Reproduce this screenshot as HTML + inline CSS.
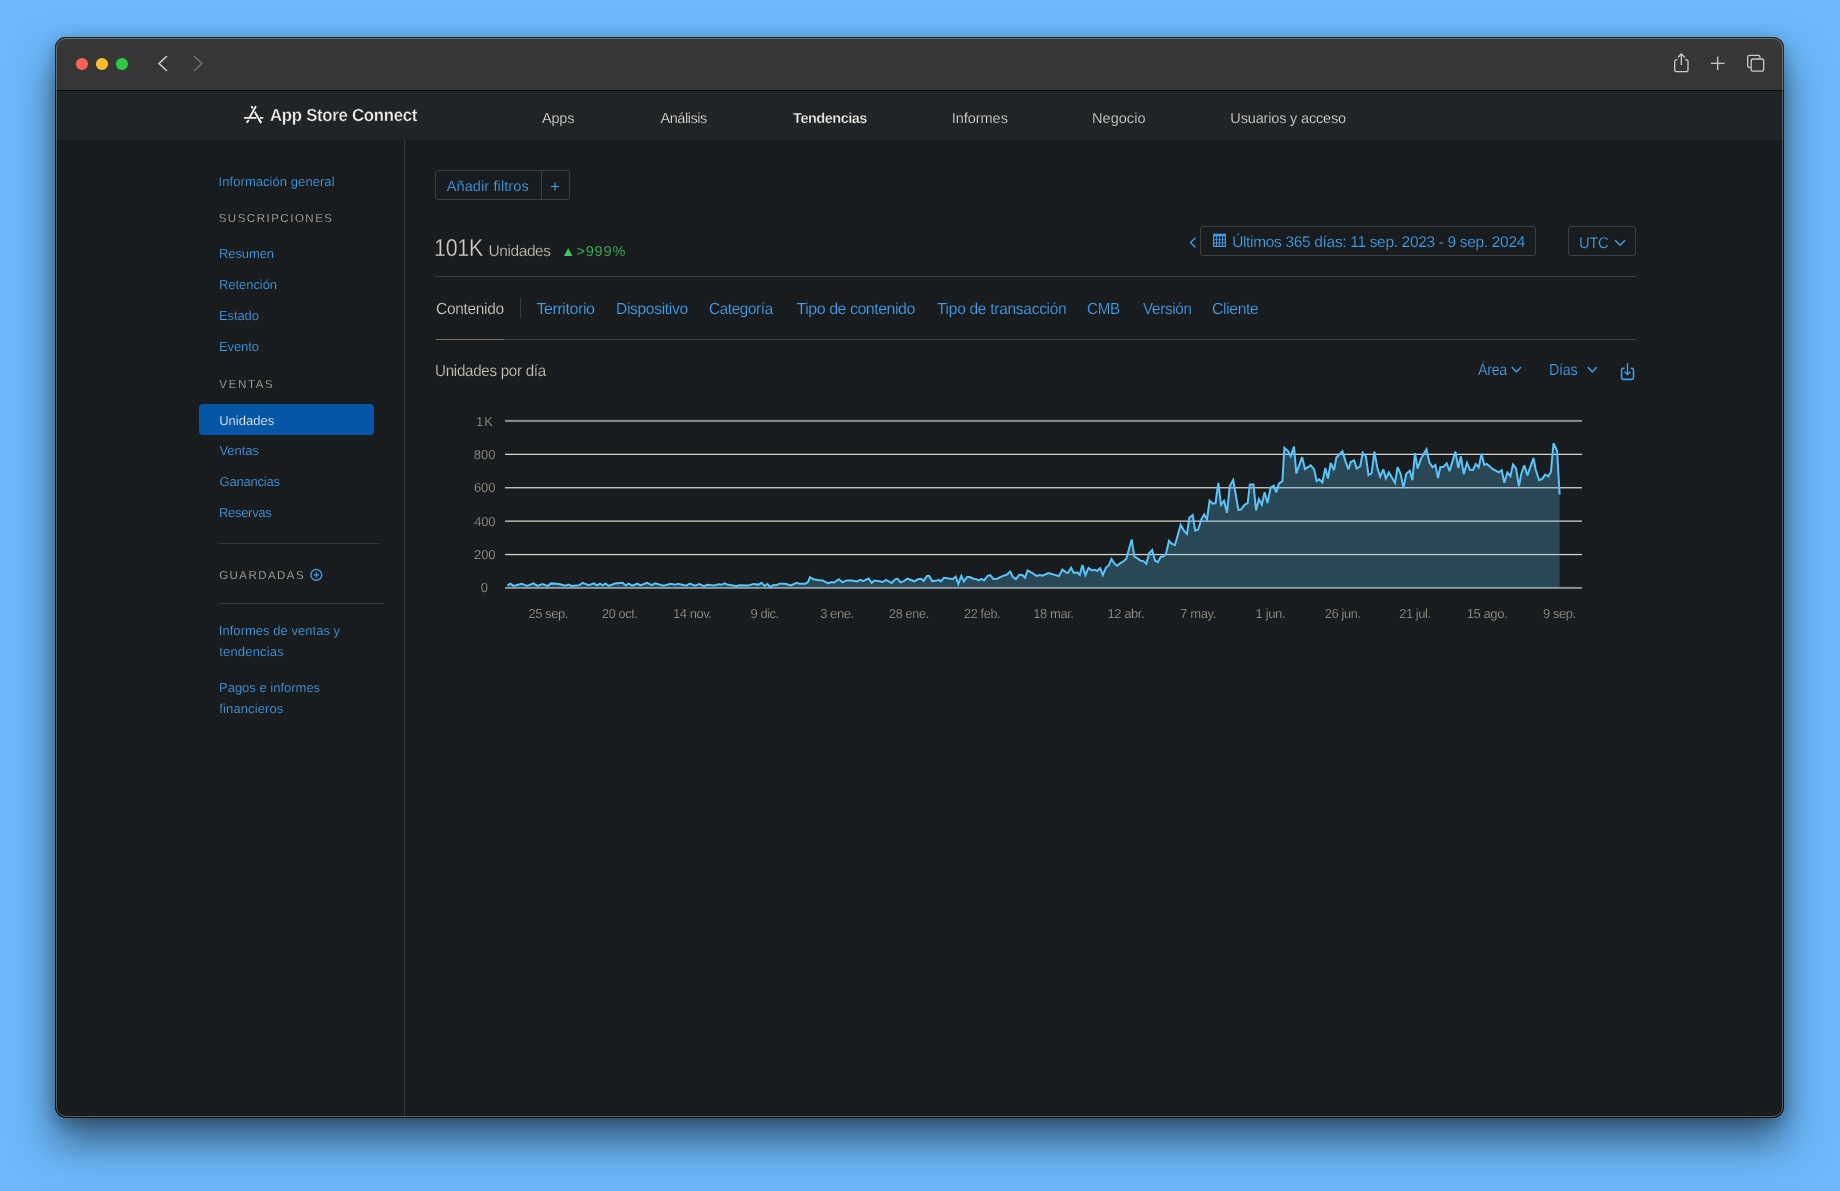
<!DOCTYPE html>
<html><head><meta charset="utf-8"><title>App Store Connect</title>
<style>
html,body{margin:0;padding:0;}
body{width:1840px;height:1191px;overflow:hidden;background:#6cb8fa;position:relative;font-family:"Liberation Sans",sans-serif;}
.win{position:absolute;left:55px;top:37px;width:1729px;height:1081px;border-radius:11px;overflow:hidden;background:#191c1e;box-shadow:0 24px 40px rgba(0,0,0,0.5),0 4px 16px rgba(0,0,0,0.25);}
.tb{position:absolute;left:0;top:0;width:1730px;height:53px;background:#363636;}
.tbline{position:absolute;left:0;top:53px;width:1730px;height:1px;background:#0b0b0b;}
.nav{position:absolute;left:0;top:54px;width:1730px;height:49px;background:#212426;}
.sep{position:absolute;left:349px;top:103px;width:1px;height:978px;background:#35383a;}
.edge{position:absolute;left:55px;top:37px;width:1729px;height:1081px;border-radius:11px;box-sizing:border-box;border:1px solid rgba(0,0,0,0.35);pointer-events:none;}
.edge2{position:absolute;left:56px;top:38px;width:1727px;height:1079px;border-radius:10px;box-sizing:border-box;border:1px solid rgba(255,255,255,0.28);pointer-events:none;}
.tl{position:absolute;left:0;top:0;width:1840px;height:1191px;will-change:transform;}
.t{position:absolute;white-space:nowrap;font-family:"Liberation Sans",sans-serif;text-rendering:geometricPrecision;}
.ov{position:absolute;left:0;top:0;}
.box{position:absolute;box-sizing:border-box;border:1px solid #3b3e41;border-radius:3px;}
</style></head>
<body>
<div class="win">
  <div class="tb"></div>
  <div class="tbline"></div>
  <div class="nav"></div>
  <div class="sep"></div>
</div>
<div class="edge"></div>
<div class="edge2"></div>

<!-- selected sidebar item -->
<div style="position:absolute;left:199px;top:404px;width:175px;height:31px;border-radius:4px;background:#0557a5;"></div>
<!-- sidebar dividers -->
<div style="position:absolute;left:219px;top:543px;width:160px;height:1px;background:#34373a;"></div>
<div style="position:absolute;left:219px;top:603px;width:165px;height:1px;background:#34373a;"></div>

<!-- filter button -->
<div class="box" style="left:435px;top:170px;width:135px;height:30px;"></div>
<div style="position:absolute;left:541px;top:171px;width:1px;height:28px;background:#3b3e41;"></div>
<!-- date box -->
<div class="box" style="left:1200px;top:226px;width:336px;height:30px;"></div>
<div class="box" style="left:1568px;top:226px;width:68px;height:30px;"></div>
<!-- dividers main -->
<div style="position:absolute;left:435px;top:276px;width:1201px;height:1px;background:#3a3d40;"></div>
<div style="position:absolute;left:520px;top:298px;width:1px;height:20px;background:#3a3d40;"></div>
<div style="position:absolute;left:435px;top:339px;width:1201px;height:1px;background:#3a3d40;"></div>
<div style="position:absolute;left:436px;top:339px;width:68px;height:1px;background:#7d705f;"></div>

<div class="tl"><div class="t" style="left:269.82px;top:107.00px;font-size:17.5px;line-height:17.5px;color:#f2efea;font-weight:700;letter-spacing:-0.300px;transform:scaleX(0.9593);transform-origin:0 0;-webkit-text-stroke:0.35px #212426;">App Store Connect</div>
<div class="t" style="left:541.98px;top:112.00px;font-size:14.5px;line-height:14.5px;color:#dcd8d2;font-weight:400;letter-spacing:-0.169px;-webkit-text-stroke:0.2px #212426;">Apps</div>
<div class="t" style="left:660.42px;top:112.00px;font-size:14.5px;line-height:14.5px;color:#dcd8d2;font-weight:400;letter-spacing:-0.434px;-webkit-text-stroke:0.2px #212426;">Análisis</div>
<div class="t" style="left:793.08px;top:112.00px;font-size:14.5px;line-height:14.5px;color:#f2efea;font-weight:700;letter-spacing:-0.483px;-webkit-text-stroke:0.3px #212426;">Tendencias</div>
<div class="t" style="left:951.73px;top:112.00px;font-size:14.5px;line-height:14.5px;color:#dcd8d2;font-weight:400;letter-spacing:-0.032px;-webkit-text-stroke:0.2px #212426;">Informes</div>
<div class="t" style="left:1092.08px;top:112.00px;font-size:14.5px;line-height:14.5px;color:#dcd8d2;font-weight:400;letter-spacing:0.032px;-webkit-text-stroke:0.2px #212426;">Negocio</div>
<div class="t" style="left:1230.35px;top:112.00px;font-size:14.5px;line-height:14.5px;color:#dcd8d2;font-weight:400;letter-spacing:-0.168px;-webkit-text-stroke:0.2px #212426;">Usuarios y acceso</div>
<div class="t" style="left:218.57px;top:175.00px;font-size:13px;line-height:13px;color:#43a0ec;font-weight:400;letter-spacing:0.060px;-webkit-text-stroke:0.2px #191c1e;">Información general</div>
<div class="t" style="left:218.65px;top:214.00px;font-size:11.5px;line-height:11.5px;color:#bab3a9;font-weight:400;letter-spacing:1.514px;-webkit-text-stroke:0.2px #191c1e;">SUSCRIPCIONES</div>
<div class="t" style="left:219.03px;top:247.00px;font-size:13px;line-height:13px;color:#43a0ec;font-weight:400;letter-spacing:-0.099px;-webkit-text-stroke:0.2px #191c1e;">Resumen</div>
<div class="t" style="left:219.03px;top:278.00px;font-size:13px;line-height:13px;color:#43a0ec;font-weight:400;letter-spacing:-0.063px;-webkit-text-stroke:0.2px #191c1e;">Retención</div>
<div class="t" style="left:218.99px;top:309.00px;font-size:13px;line-height:13px;color:#43a0ec;font-weight:400;letter-spacing:-0.099px;-webkit-text-stroke:0.2px #191c1e;">Estado</div>
<div class="t" style="left:218.99px;top:340.00px;font-size:13px;line-height:13px;color:#43a0ec;font-weight:400;letter-spacing:-0.099px;-webkit-text-stroke:0.2px #191c1e;">Evento</div>
<div class="t" style="left:219.31px;top:380.00px;font-size:11.5px;line-height:11.5px;color:#bab3a9;font-weight:400;letter-spacing:1.660px;-webkit-text-stroke:0.2px #191c1e;">VENTAS</div>
<div class="t" style="left:219.19px;top:414.00px;font-size:13px;line-height:13px;color:#f4f2ee;font-weight:400;letter-spacing:0.008px;-webkit-text-stroke:0.2px #0557a5;">Unidades</div>
<div class="t" style="left:219.41px;top:444.00px;font-size:13px;line-height:13px;color:#43a0ec;font-weight:400;letter-spacing:-0.048px;-webkit-text-stroke:0.2px #191c1e;">Ventas</div>
<div class="t" style="left:219.48px;top:475.00px;font-size:13px;line-height:13px;color:#43a0ec;font-weight:400;letter-spacing:-0.204px;-webkit-text-stroke:0.2px #191c1e;">Ganancias</div>
<div class="t" style="left:219.04px;top:506.00px;font-size:13px;line-height:13px;color:#43a0ec;font-weight:400;letter-spacing:-0.316px;-webkit-text-stroke:0.2px #191c1e;">Reservas</div>
<div class="t" style="left:219.13px;top:571.00px;font-size:11.5px;line-height:11.5px;color:#bab3a9;font-weight:400;letter-spacing:1.451px;-webkit-text-stroke:0.2px #191c1e;">GUARDADAS</div>
<div class="t" style="left:218.83px;top:624.00px;font-size:13px;line-height:13px;color:#43a0ec;font-weight:400;letter-spacing:0.031px;-webkit-text-stroke:0.2px #191c1e;">Informes de ventas y</div>
<div class="t" style="left:219.23px;top:645.00px;font-size:13px;line-height:13px;color:#43a0ec;font-weight:400;letter-spacing:0.186px;-webkit-text-stroke:0.2px #191c1e;">tendencias</div>
<div class="t" style="left:218.99px;top:681.00px;font-size:13px;line-height:13px;color:#43a0ec;font-weight:400;letter-spacing:-0.003px;-webkit-text-stroke:0.2px #191c1e;">Pagos e informes</div>
<div class="t" style="left:219.33px;top:702.00px;font-size:13px;line-height:13px;color:#43a0ec;font-weight:400;letter-spacing:0.117px;-webkit-text-stroke:0.2px #191c1e;">financieros</div>
<div class="t" style="left:446.73px;top:180.00px;font-size:14.5px;line-height:14.5px;color:#43a0ec;font-weight:400;letter-spacing:0.108px;-webkit-text-stroke:0.2px #191c1e;">Añadir filtros</div>
<div class="t" style="left:434.12px;top:237.00px;font-size:24.5px;line-height:24.5px;color:#d2cbc1;font-weight:400;letter-spacing:-0.300px;transform:scaleX(0.8751);transform-origin:0 0;-webkit-text-stroke:0.3px #191c1e;">101K</div>
<div class="t" style="left:488.50px;top:244.00px;font-size:15.5px;line-height:15.5px;color:#c2bbb1;font-weight:400;letter-spacing:-0.421px;-webkit-text-stroke:0.2px #191c1e;">Unidades</div>
<div class="t" style="left:576.45px;top:245.00px;font-size:14.5px;line-height:14.5px;color:#3ec95a;font-weight:400;letter-spacing:0.824px;-webkit-text-stroke:0.2px #191c1e;">>999%</div>
<div class="t" style="left:1232.13px;top:235.00px;font-size:15.5px;line-height:15.5px;color:#43a0ec;font-weight:400;letter-spacing:-0.329px;-webkit-text-stroke:0.2px #191c1e;">Últimos 365 días: 11 sep. 2023 - 9 sep. 2024</div>
<div class="t" style="left:1578.81px;top:236.00px;font-size:15.5px;line-height:15.5px;color:#43a0ec;font-weight:400;letter-spacing:-0.300px;transform:scaleX(0.9508);transform-origin:0 0;-webkit-text-stroke:0.2px #191c1e;">UTC</div>
<div class="t" style="left:436.39px;top:302.00px;font-size:16px;line-height:16px;color:#d2cbc1;font-weight:400;letter-spacing:-0.300px;transform:scaleX(0.9663);transform-origin:0 0;-webkit-text-stroke:0.2px #191c1e;">Contenido</div>
<div class="t" style="left:536.44px;top:302.00px;font-size:16px;line-height:16px;color:#43a0ec;font-weight:400;letter-spacing:-0.409px;-webkit-text-stroke:0.2px #191c1e;">Territorio</div>
<div class="t" style="left:616.02px;top:302.00px;font-size:16px;line-height:16px;color:#43a0ec;font-weight:400;letter-spacing:-0.300px;transform:scaleX(0.9696);transform-origin:0 0;-webkit-text-stroke:0.2px #191c1e;">Dispositivo</div>
<div class="t" style="left:709.39px;top:302.00px;font-size:16px;line-height:16px;color:#43a0ec;font-weight:400;letter-spacing:-0.300px;transform:scaleX(0.9460);transform-origin:0 0;-webkit-text-stroke:0.2px #191c1e;">Categoría</div>
<div class="t" style="left:796.60px;top:302.00px;font-size:16px;line-height:16px;color:#43a0ec;font-weight:400;letter-spacing:-0.489px;-webkit-text-stroke:0.2px #191c1e;">Tipo de contenido</div>
<div class="t" style="left:936.75px;top:302.00px;font-size:16px;line-height:16px;color:#43a0ec;font-weight:400;letter-spacing:-0.300px;transform:scaleX(0.9710);transform-origin:0 0;-webkit-text-stroke:0.2px #191c1e;">Tipo de transacción</div>
<div class="t" style="left:1087.43px;top:302.00px;font-size:16px;line-height:16px;color:#43a0ec;font-weight:400;letter-spacing:-0.300px;transform:scaleX(0.9448);transform-origin:0 0;-webkit-text-stroke:0.2px #191c1e;">CMB</div>
<div class="t" style="left:1142.92px;top:302.00px;font-size:16px;line-height:16px;color:#43a0ec;font-weight:400;letter-spacing:-0.300px;transform:scaleX(0.9469);transform-origin:0 0;-webkit-text-stroke:0.2px #191c1e;">Versión</div>
<div class="t" style="left:1212.35px;top:302.00px;font-size:16px;line-height:16px;color:#43a0ec;font-weight:400;letter-spacing:-0.300px;transform:scaleX(0.9746);transform-origin:0 0;-webkit-text-stroke:0.2px #191c1e;">Cliente</div>
<div class="t" style="left:434.94px;top:364.00px;font-size:16px;line-height:16px;color:#c8c1b7;font-weight:400;letter-spacing:-0.300px;transform:scaleX(0.9470);transform-origin:0 0;-webkit-text-stroke:0.2px #191c1e;">Unidades por día</div>
<div class="t" style="left:1477.65px;top:363.00px;font-size:16px;line-height:16px;color:#43a0ec;font-weight:400;letter-spacing:-0.300px;transform:scaleX(0.8871);transform-origin:0 0;-webkit-text-stroke:0.2px #191c1e;">Área</div>
<div class="t" style="left:1549.30px;top:363.00px;font-size:16px;line-height:16px;color:#43a0ec;font-weight:400;letter-spacing:-0.300px;transform:scaleX(0.8915);transform-origin:0 0;-webkit-text-stroke:0.2px #191c1e;">Días</div>
<div class="t" style="left:476.00px;top:415.00px;font-size:13px;line-height:13px;color:#a39d94;font-weight:400;letter-spacing:1.062px;-webkit-text-stroke:0.25px #191c1e;">1K</div>
<div class="t" style="left:473.72px;top:448.00px;font-size:13px;line-height:13px;color:#a39d94;font-weight:400;letter-spacing:0.092px;-webkit-text-stroke:0.25px #191c1e;">800</div>
<div class="t" style="left:473.95px;top:481.00px;font-size:13px;line-height:13px;color:#a39d94;font-weight:400;letter-spacing:-0.071px;-webkit-text-stroke:0.25px #191c1e;">600</div>
<div class="t" style="left:474.14px;top:515.00px;font-size:13px;line-height:13px;color:#a39d94;font-weight:400;letter-spacing:-0.184px;-webkit-text-stroke:0.25px #191c1e;">400</div>
<div class="t" style="left:473.94px;top:548.00px;font-size:13px;line-height:13px;color:#a39d94;font-weight:400;letter-spacing:-0.023px;-webkit-text-stroke:0.25px #191c1e;">200</div>
<div class="t" style="left:480.79px;top:581.00px;font-size:13px;line-height:13px;color:#a39d94;font-weight:400;letter-spacing:0.000px;-webkit-text-stroke:0.25px #191c1e;">0</div>
<div class="t" style="left:528.60px;top:607.00px;font-size:13px;line-height:13px;color:#a39d94;font-weight:400;letter-spacing:-0.480px;-webkit-text-stroke:0.25px #191c1e;">25 sep.</div>
<div class="t" style="left:602.44px;top:607.00px;font-size:13px;line-height:13px;color:#a39d94;font-weight:400;letter-spacing:-0.300px;transform:scaleX(0.9657);transform-origin:0 0;-webkit-text-stroke:0.25px #191c1e;">20 oct.</div>
<div class="t" style="left:672.96px;top:607.00px;font-size:13px;line-height:13px;color:#a39d94;font-weight:400;letter-spacing:-0.450px;-webkit-text-stroke:0.25px #191c1e;">14 nov.</div>
<div class="t" style="left:750.57px;top:607.00px;font-size:13px;line-height:13px;color:#a39d94;font-weight:400;letter-spacing:-0.483px;-webkit-text-stroke:0.25px #191c1e;">9 dic.</div>
<div class="t" style="left:820.13px;top:607.00px;font-size:13px;line-height:13px;color:#a39d94;font-weight:400;letter-spacing:-0.433px;-webkit-text-stroke:0.25px #191c1e;">3 ene.</div>
<div class="t" style="left:889.25px;top:607.00px;font-size:13px;line-height:13px;color:#a39d94;font-weight:400;letter-spacing:-0.300px;transform:scaleX(0.9656);transform-origin:0 0;-webkit-text-stroke:0.25px #191c1e;">28 ene.</div>
<div class="t" style="left:963.55px;top:607.00px;font-size:13px;line-height:13px;color:#a39d94;font-weight:400;letter-spacing:-0.300px;transform:scaleX(0.9635);transform-origin:0 0;-webkit-text-stroke:0.25px #191c1e;">22 feb.</div>
<div class="t" style="left:1033.32px;top:607.00px;font-size:13px;line-height:13px;color:#a39d94;font-weight:400;letter-spacing:-0.448px;-webkit-text-stroke:0.25px #191c1e;">18 mar.</div>
<div class="t" style="left:1107.39px;top:607.00px;font-size:13px;line-height:13px;color:#a39d94;font-weight:400;letter-spacing:-0.419px;-webkit-text-stroke:0.25px #191c1e;">12 abr.</div>
<div class="t" style="left:1180.33px;top:607.00px;font-size:13px;line-height:13px;color:#a39d94;font-weight:400;letter-spacing:-0.408px;-webkit-text-stroke:0.25px #191c1e;">7 may.</div>
<div class="t" style="left:1255.52px;top:607.00px;font-size:13px;line-height:13px;color:#a39d94;font-weight:400;letter-spacing:-0.360px;-webkit-text-stroke:0.25px #191c1e;">1 jun.</div>
<div class="t" style="left:1324.80px;top:607.00px;font-size:13px;line-height:13px;color:#a39d94;font-weight:400;letter-spacing:-0.300px;transform:scaleX(0.9667);transform-origin:0 0;-webkit-text-stroke:0.25px #191c1e;">26 jun.</div>
<div class="t" style="left:1399.26px;top:607.00px;font-size:13px;line-height:13px;color:#a39d94;font-weight:400;letter-spacing:-0.486px;-webkit-text-stroke:0.25px #191c1e;">21 jul.</div>
<div class="t" style="left:1466.68px;top:607.00px;font-size:13px;line-height:13px;color:#a39d94;font-weight:400;letter-spacing:-0.401px;-webkit-text-stroke:0.25px #191c1e;">15 ago.</div>
<div class="t" style="left:1543.08px;top:607.00px;font-size:13px;line-height:13px;color:#a39d94;font-weight:400;letter-spacing:-0.461px;-webkit-text-stroke:0.25px #191c1e;">9 sep.</div></div>

<svg class="ov" width="1840" height="1191" viewBox="0 0 1840 1191">
  <!-- traffic lights -->
  <circle cx="82" cy="64" r="6.1" fill="#fe5f57"/>
  <circle cx="102" cy="64" r="6.1" fill="#febc2e"/>
  <circle cx="122" cy="64" r="6.1" fill="#28c840"/>
  <!-- back / forward -->
  <polyline points="166.5,56.5 159,63.5 166.5,70.5" fill="none" stroke="#cfcfcf" stroke-width="1.6" stroke-linecap="round" stroke-linejoin="round"/>
  <polyline points="194.5,56.5 202,63.5 194.5,70.5" fill="none" stroke="#6e6e6e" stroke-width="1.6" stroke-linecap="round" stroke-linejoin="round"/>
  <!-- share -->
  <path d="M1677.6,59.6 h-1.1 a1.8,1.8 0 0 0 -1.8,1.8 v8.5 a1.8,1.8 0 0 0 1.8,1.8 h9.7 a1.8,1.8 0 0 0 1.8,-1.8 v-8.5 a1.8,1.8 0 0 0 -1.8,-1.8 h-1.2" fill="none" stroke="#c9c9c9" stroke-width="1.3"/>
  <line x1="1681.35" y1="54" x2="1681.35" y2="65" stroke="#c9c9c9" stroke-width="1.3"/>
  <polyline points="1678.3,57 1681.35,54 1684.4,57" fill="none" stroke="#c9c9c9" stroke-width="1.3" stroke-linecap="round"/>
  <!-- plus -->
  <line x1="1711" y1="63.3" x2="1724.5" y2="63.3" stroke="#c9c9c9" stroke-width="1.3"/>
  <line x1="1717.7" y1="56.5" x2="1717.7" y2="70" stroke="#c9c9c9" stroke-width="1.3"/>
  <!-- tabs -->
  <path d="M1750.5,67.5 h-1 a1.8,1.8 0 0 1 -1.8,-1.8 v-8.6 a1.8,1.8 0 0 1 1.8,-1.8 h8.6 a1.8,1.8 0 0 1 1.8,1.8 v1" fill="none" stroke="#c9c9c9" stroke-width="1.3"/>
  <rect x="1751.2" y="59" width="12.5" height="12.2" rx="1.9" fill="none" stroke="#c9c9c9" stroke-width="1.3"/>
  <!-- logo -->
  <g stroke-linecap="round" fill="none">
    <line x1="244.8" y1="117.9" x2="262.4" y2="117.9" stroke="#f2efea" stroke-width="1.9"/>
    <line x1="251.80" y1="106.80" x2="260.70" y2="122.20" stroke="#f2efea" stroke-width="1.9"/>
    <line x1="254.88" y1="108.08" x2="252.90" y2="111.61" stroke="#212426" stroke-width="3.6" stroke-linecap="butt"/>
    <line x1="255.60" y1="106.80" x2="249.60" y2="117.50" stroke="#f2efea" stroke-width="1.9"/>
    <line x1="257.50" y1="116.66" x2="258.92" y2="119.12" stroke="#212426" stroke-width="3.6" stroke-linecap="butt"/>
    <line x1="256.69" y1="115.27" x2="260.70" y2="122.20" stroke="#f2efea" stroke-width="1.9"/>
    <line x1="247.1" y1="122" x2="248.4" y2="120.6" stroke="#f2efea" stroke-width="1.9"/>
  </g>
  <!-- circle plus -->
  <circle cx="316.3" cy="574.9" r="5.4" fill="none" stroke="#409ce8" stroke-width="1.4"/>
  <line x1="313.6" y1="574.9" x2="319" y2="574.9" stroke="#409ce8" stroke-width="1.3"/>
  <line x1="316.3" y1="572.2" x2="316.3" y2="577.6" stroke="#409ce8" stroke-width="1.3"/>
  <!-- plus in filter button -->
  <line x1="551" y1="186.5" x2="559" y2="186.5" stroke="#409ce8" stroke-width="1.2"/>
  <line x1="555" y1="182.5" x2="555" y2="190.5" stroke="#409ce8" stroke-width="1.2"/>
  <!-- up triangle -->
  <polygon points="564,256 572.4,256 568.2,248" fill="#3ec95a"/>
  <!-- date left chevron -->
  <polyline points="1195,238.3 1190.5,242.6 1195,246.9" fill="none" stroke="#409ce8" stroke-width="1.4" stroke-linecap="round" stroke-linejoin="round"/>
  <!-- calendar icon -->
  <g fill="#409ce8">
    <rect x="1213" y="233.7" width="13" height="2.6"/>
    <rect x="1213" y="233.7" width="1.2" height="13.3"/>
    <rect x="1224.8" y="233.7" width="1.2" height="13.3"/>
    <rect x="1213" y="245.8" width="13" height="1.2"/>
    <rect x="1216" y="236" width="0.9" height="10"/>
    <rect x="1219" y="236" width="0.9" height="10"/>
    <rect x="1222" y="236" width="0.9" height="10"/>
    <rect x="1213" y="239.3" width="13" height="0.9"/>
    <rect x="1213" y="242.5" width="13" height="0.9"/>
  </g>
  <!-- utc chevron -->
  <polyline points="1615.5,240.5 1620.1,245.3 1624.7,240.5" fill="none" stroke="#409ce8" stroke-width="1.4" stroke-linecap="round" stroke-linejoin="round"/>
  <!-- area / dias chevrons -->
  <polyline points="1512.2,367.5 1516.4,372 1520.6,367.5" fill="none" stroke="#409ce8" stroke-width="1.4" stroke-linecap="round" stroke-linejoin="round"/>
  <polyline points="1588.2,367.5 1592.3,372 1596.4,367.5" fill="none" stroke="#409ce8" stroke-width="1.4" stroke-linecap="round" stroke-linejoin="round"/>
  <!-- download -->
  <path d="M1624.5,368.3 h-1.3 a1.6,1.6 0 0 0 -1.6,1.6 v7.9 a1.6,1.6 0 0 0 1.6,1.6 h8.7 a1.6,1.6 0 0 0 1.6,-1.6 v-7.9 a1.6,1.6 0 0 0 -1.6,-1.6 h-1.3" fill="none" stroke="#409ce8" stroke-width="1.6"/>
  <line x1="1627.5" y1="363.6" x2="1627.5" y2="374" stroke="#409ce8" stroke-width="1.4" stroke-linecap="round"/>
  <polyline points="1625,372 1627.5,374.5 1630,372" fill="none" stroke="#409ce8" stroke-width="1.3" stroke-linecap="round"/>
</svg>

<svg class="ov" width="1840" height="1191" viewBox="0 0 1840 1191">
<rect x="505" y="419.9" width="1077" height="2" fill="#8d8d8b"/><rect x="505" y="453.7" width="1077" height="1.3" fill="#d2cec8"/><rect x="505" y="487.1" width="1077" height="1.3" fill="#d2cec8"/><rect x="505" y="520.5" width="1077" height="1.3" fill="#d2cec8"/><rect x="505" y="553.9" width="1077" height="1.3" fill="#d2cec8"/><rect x="505" y="586.9" width="1077" height="2" fill="#8d8d8b"/>
<path d="M507.4,587.9 L507.4,585.4 L510.4,583.7 L513.5,585.9 L521.7,583.7 L527.0,586.0 L533.5,583.3 L537.4,585.9 L542.6,584.0 L547.8,586.0 L550.9,583.4 L559.1,584.0 L565.2,585.7 L568.7,584.6 L571.3,585.9 L579.1,585.2 L582.6,582.8 L588.7,585.2 L593.9,583.3 L597.0,585.4 L600.0,583.7 L602.6,585.4 L605.7,583.4 L608.7,585.9 L614.8,583.5 L622.6,582.7 L625.7,585.4 L628.7,583.7 L632.2,585.6 L637.4,583.7 L640.4,585.4 L647.0,582.9 L651.7,585.2 L655.0,583.3 L663.7,585.6 L670.7,583.7 L675.4,584.8 L678.0,583.7 L686.3,585.6 L689.8,583.5 L695.0,585.6 L699.3,584.1 L704.1,586.1 L707.2,584.8 L714.1,585.4 L718.5,584.3 L721.5,584.8 L724.6,583.4 L728.0,584.8 L733.3,585.4 L735.9,586.3 L739.3,585.2 L748.0,585.6 L753.3,583.9 L758.5,584.6 L761.5,582.8 L764.6,585.9 L767.6,584.0 L770.2,587.2 L773.3,585.0 L776.7,585.2 L779.3,583.7 L785.4,583.7 L790.7,585.4 L796.7,582.8 L799.3,583.7 L805.4,583.7 L808.0,582.0 L810.0,577.2 L813.5,579.3 L817.8,580.0 L822.6,580.4 L828.3,583.3 L831.7,582.0 L833.9,582.7 L838.7,579.3 L842.6,582.4 L846.5,580.4 L851.7,580.4 L857.0,581.5 L860.4,579.8 L863.0,581.1 L868.7,578.5 L871.7,583.0 L874.3,580.5 L879.6,581.3 L882.6,582.0 L886.1,579.8 L891.7,583.0 L895.2,579.3 L897.4,578.7 L900.4,582.4 L903.9,581.1 L907.4,578.7 L914.3,581.3 L917.8,579.3 L921.3,578.7 L923.5,580.9 L927.0,576.0 L929.1,575.9 L932.2,581.1 L937.0,580.4 L938.7,579.8 L940.9,581.3 L943.9,577.8 L949.1,578.5 L952.6,579.2 L955.7,576.6 L958.3,584.1 L961.3,575.9 L963.9,581.5 L967.2,577.0 L969.8,577.0 L973.3,578.7 L976.3,579.1 L978.5,580.3 L981.5,578.9 L984.1,580.4 L987.6,575.9 L990.2,575.2 L993.3,578.9 L997.2,578.7 L1002.4,576.1 L1006.7,574.8 L1010.2,571.6 L1012.8,577.0 L1015.9,579.1 L1019.3,574.8 L1022.4,575.0 L1025.0,577.8 L1027.6,570.4 L1032.8,573.3 L1036.3,575.9 L1039.8,575.0 L1042.4,575.7 L1048.5,573.0 L1058.9,576.1 L1062.4,569.6 L1065.9,572.4 L1068.0,572.8 L1071.1,567.8 L1073.7,573.0 L1077.2,572.4 L1079.8,574.8 L1082.4,565.0 L1085.4,575.2 L1088.5,568.1 L1092.0,570.4 L1094.6,569.8 L1097.2,571.0 L1100.2,568.3 L1102.8,575.0 L1105.9,567.8 L1108.9,565.2 L1111.5,559.1 L1114.6,563.9 L1117.2,565.7 L1120.7,562.9 L1123.7,561.3 L1126.3,558.8 L1131.7,539.4 L1134.3,556.7 L1136.8,557.9 L1140.8,560.7 L1143.4,561.1 L1146.3,563.8 L1149.1,553.3 L1152.2,549.9 L1155.1,560.7 L1157.9,562.2 L1160.8,556.7 L1163.6,556.2 L1165.9,553.9 L1169.0,540.8 L1171.6,543.6 L1175.0,545.1 L1180.7,524.8 L1184.2,531.1 L1187.0,533.9 L1189.3,517.9 L1192.7,515.1 L1195.2,530.7 L1198.2,529.6 L1201.3,519.3 L1204.1,514.5 L1207.0,519.3 L1209.6,500.6 L1212.7,503.7 L1215.5,503.1 L1218.4,482.8 L1221.0,504.8 L1224.1,500.8 L1227.0,512.8 L1229.8,486.0 L1233.2,480.0 L1238.4,510.0 L1241.2,509.4 L1244.6,504.8 L1247.7,503.1 L1249.8,484.6 L1253.4,484.3 L1256.1,510.5 L1258.9,499.1 L1261.8,504.8 L1264.6,492.3 L1267.5,503.1 L1270.6,487.7 L1273.7,485.7 L1276.3,492.3 L1278.9,483.7 L1282.4,481.1 L1284.4,447.9 L1288.0,451.1 L1290.7,456.3 L1294.0,446.7 L1296.3,473.3 L1302.1,457.2 L1305.0,469.1 L1310.7,465.3 L1314.1,469.3 L1316.7,481.1 L1319.3,479.3 L1322.4,482.4 L1325.3,468.0 L1328.0,478.5 L1330.7,463.0 L1334.1,470.2 L1336.3,457.8 L1342.4,451.3 L1345.4,461.1 L1348.5,469.3 L1350.7,462.0 L1354.1,460.4 L1356.7,468.5 L1360.2,466.3 L1362.7,452.8 L1365.9,456.6 L1368.5,475.0 L1371.7,473.1 L1374.3,451.5 L1377.6,468.9 L1380.2,476.7 L1383.3,469.3 L1385.9,478.5 L1388.9,472.4 L1395.0,482.8 L1397.6,467.2 L1400.7,474.1 L1403.5,488.0 L1406.3,473.7 L1409.8,470.7 L1412.4,480.2 L1415.0,453.1 L1417.6,468.5 L1421.1,458.5 L1426.5,449.3 L1429.3,462.4 L1432.6,467.2 L1435.4,465.0 L1438.0,478.0 L1440.4,467.0 L1443.5,466.7 L1446.7,463.3 L1449.6,471.1 L1455.4,451.5 L1458.3,468.0 L1460.9,456.3 L1463.7,474.1 L1467.0,462.8 L1470.0,469.8 L1473.0,470.0 L1475.7,464.1 L1478.7,467.2 L1481.5,454.1 L1484.3,465.0 L1487.0,463.9 L1492.6,468.9 L1498.7,472.4 L1501.7,470.2 L1504.3,482.8 L1507.4,472.4 L1510.4,476.3 L1513.0,464.6 L1516.1,468.5 L1518.9,486.3 L1521.7,472.4 L1524.3,465.4 L1527.4,475.4 L1533.5,458.0 L1535.7,469.8 L1539.1,480.2 L1542.2,478.9 L1545.2,474.6 L1548.3,476.3 L1550.9,472.0 L1553.5,443.3 L1557.1,450.7 L1559.6,494.6 L1559.6,587.9 Z" fill="rgba(92,200,252,0.25)"/>
<polyline points="507.4,585.4 510.4,583.7 513.5,585.9 521.7,583.7 527.0,586.0 533.5,583.3 537.4,585.9 542.6,584.0 547.8,586.0 550.9,583.4 559.1,584.0 565.2,585.7 568.7,584.6 571.3,585.9 579.1,585.2 582.6,582.8 588.7,585.2 593.9,583.3 597.0,585.4 600.0,583.7 602.6,585.4 605.7,583.4 608.7,585.9 614.8,583.5 622.6,582.7 625.7,585.4 628.7,583.7 632.2,585.6 637.4,583.7 640.4,585.4 647.0,582.9 651.7,585.2 655.0,583.3 663.7,585.6 670.7,583.7 675.4,584.8 678.0,583.7 686.3,585.6 689.8,583.5 695.0,585.6 699.3,584.1 704.1,586.1 707.2,584.8 714.1,585.4 718.5,584.3 721.5,584.8 724.6,583.4 728.0,584.8 733.3,585.4 735.9,586.3 739.3,585.2 748.0,585.6 753.3,583.9 758.5,584.6 761.5,582.8 764.6,585.9 767.6,584.0 770.2,587.2 773.3,585.0 776.7,585.2 779.3,583.7 785.4,583.7 790.7,585.4 796.7,582.8 799.3,583.7 805.4,583.7 808.0,582.0 810.0,577.2 813.5,579.3 817.8,580.0 822.6,580.4 828.3,583.3 831.7,582.0 833.9,582.7 838.7,579.3 842.6,582.4 846.5,580.4 851.7,580.4 857.0,581.5 860.4,579.8 863.0,581.1 868.7,578.5 871.7,583.0 874.3,580.5 879.6,581.3 882.6,582.0 886.1,579.8 891.7,583.0 895.2,579.3 897.4,578.7 900.4,582.4 903.9,581.1 907.4,578.7 914.3,581.3 917.8,579.3 921.3,578.7 923.5,580.9 927.0,576.0 929.1,575.9 932.2,581.1 937.0,580.4 938.7,579.8 940.9,581.3 943.9,577.8 949.1,578.5 952.6,579.2 955.7,576.6 958.3,584.1 961.3,575.9 963.9,581.5 967.2,577.0 969.8,577.0 973.3,578.7 976.3,579.1 978.5,580.3 981.5,578.9 984.1,580.4 987.6,575.9 990.2,575.2 993.3,578.9 997.2,578.7 1002.4,576.1 1006.7,574.8 1010.2,571.6 1012.8,577.0 1015.9,579.1 1019.3,574.8 1022.4,575.0 1025.0,577.8 1027.6,570.4 1032.8,573.3 1036.3,575.9 1039.8,575.0 1042.4,575.7 1048.5,573.0 1058.9,576.1 1062.4,569.6 1065.9,572.4 1068.0,572.8 1071.1,567.8 1073.7,573.0 1077.2,572.4 1079.8,574.8 1082.4,565.0 1085.4,575.2 1088.5,568.1 1092.0,570.4 1094.6,569.8 1097.2,571.0 1100.2,568.3 1102.8,575.0 1105.9,567.8 1108.9,565.2 1111.5,559.1 1114.6,563.9 1117.2,565.7 1120.7,562.9 1123.7,561.3 1126.3,558.8 1131.7,539.4 1134.3,556.7 1136.8,557.9 1140.8,560.7 1143.4,561.1 1146.3,563.8 1149.1,553.3 1152.2,549.9 1155.1,560.7 1157.9,562.2 1160.8,556.7 1163.6,556.2 1165.9,553.9 1169.0,540.8 1171.6,543.6 1175.0,545.1 1180.7,524.8 1184.2,531.1 1187.0,533.9 1189.3,517.9 1192.7,515.1 1195.2,530.7 1198.2,529.6 1201.3,519.3 1204.1,514.5 1207.0,519.3 1209.6,500.6 1212.7,503.7 1215.5,503.1 1218.4,482.8 1221.0,504.8 1224.1,500.8 1227.0,512.8 1229.8,486.0 1233.2,480.0 1238.4,510.0 1241.2,509.4 1244.6,504.8 1247.7,503.1 1249.8,484.6 1253.4,484.3 1256.1,510.5 1258.9,499.1 1261.8,504.8 1264.6,492.3 1267.5,503.1 1270.6,487.7 1273.7,485.7 1276.3,492.3 1278.9,483.7 1282.4,481.1 1284.4,447.9 1288.0,451.1 1290.7,456.3 1294.0,446.7 1296.3,473.3 1302.1,457.2 1305.0,469.1 1310.7,465.3 1314.1,469.3 1316.7,481.1 1319.3,479.3 1322.4,482.4 1325.3,468.0 1328.0,478.5 1330.7,463.0 1334.1,470.2 1336.3,457.8 1342.4,451.3 1345.4,461.1 1348.5,469.3 1350.7,462.0 1354.1,460.4 1356.7,468.5 1360.2,466.3 1362.7,452.8 1365.9,456.6 1368.5,475.0 1371.7,473.1 1374.3,451.5 1377.6,468.9 1380.2,476.7 1383.3,469.3 1385.9,478.5 1388.9,472.4 1395.0,482.8 1397.6,467.2 1400.7,474.1 1403.5,488.0 1406.3,473.7 1409.8,470.7 1412.4,480.2 1415.0,453.1 1417.6,468.5 1421.1,458.5 1426.5,449.3 1429.3,462.4 1432.6,467.2 1435.4,465.0 1438.0,478.0 1440.4,467.0 1443.5,466.7 1446.7,463.3 1449.6,471.1 1455.4,451.5 1458.3,468.0 1460.9,456.3 1463.7,474.1 1467.0,462.8 1470.0,469.8 1473.0,470.0 1475.7,464.1 1478.7,467.2 1481.5,454.1 1484.3,465.0 1487.0,463.9 1492.6,468.9 1498.7,472.4 1501.7,470.2 1504.3,482.8 1507.4,472.4 1510.4,476.3 1513.0,464.6 1516.1,468.5 1518.9,486.3 1521.7,472.4 1524.3,465.4 1527.4,475.4 1533.5,458.0 1535.7,469.8 1539.1,480.2 1542.2,478.9 1545.2,474.6 1548.3,476.3 1550.9,472.0 1553.5,443.3 1557.1,450.7 1559.6,494.6" fill="none" stroke="#5ac3f8" stroke-width="2" stroke-linejoin="miter" stroke-miterlimit="3"/>
</svg>
</body></html>
